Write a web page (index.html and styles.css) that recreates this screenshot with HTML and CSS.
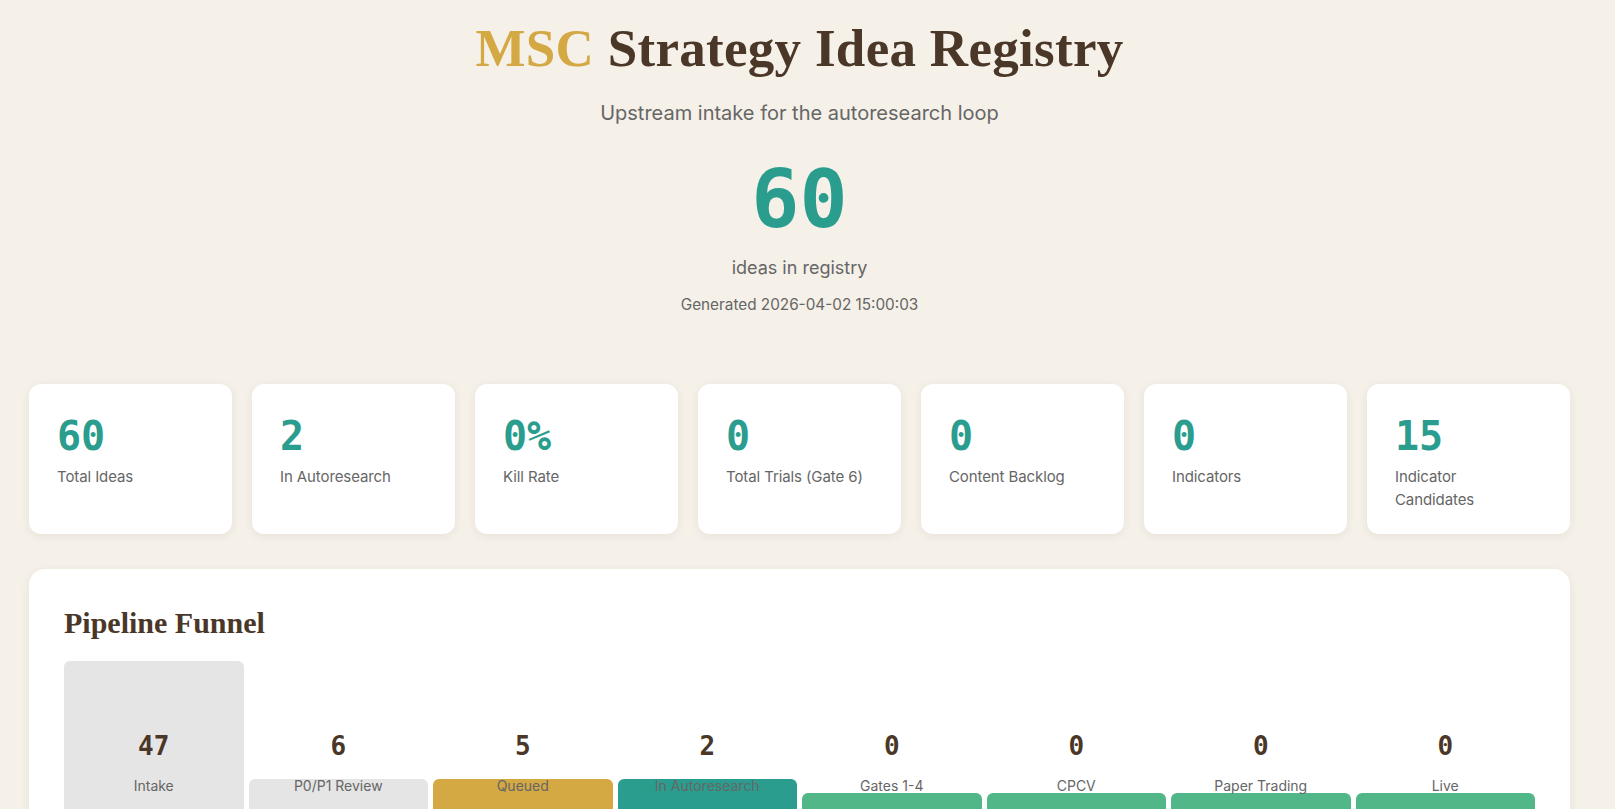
FILE: index.html
```html
<!DOCTYPE html>
<html lang="en">
<head>
<meta charset="utf-8">
<title>MSC Strategy Idea Registry</title>
<link rel="stylesheet" href="styles.css">
</head>
<body>
<div class="page">
  <header class="hero">
    <h1 class="title"><span class="brand">MSC</span> Strategy Idea Registry</h1>
    <p class="subtitle">Upstream intake for the autoresearch loop</p>
    <div class="hero-count">60</div>
    <p class="hero-label">ideas in registry</p>
    <p class="generated">Generated 2026-04-02 15:00:03</p>
  </header>

  <section class="stats">
    <div class="card"><div class="card-num">60</div><div class="card-label">Total Ideas</div></div>
    <div class="card"><div class="card-num">2</div><div class="card-label">In Autoresearch</div></div>
    <div class="card"><div class="card-num">0%</div><div class="card-label">Kill Rate</div></div>
    <div class="card"><div class="card-num">0</div><div class="card-label">Total Trials (Gate 6)</div></div>
    <div class="card"><div class="card-num">0</div><div class="card-label">Content Backlog</div></div>
    <div class="card"><div class="card-num">0</div><div class="card-label">Indicators</div></div>
    <div class="card"><div class="card-num">15</div><div class="card-label">Indicator Candidates</div></div>
  </section>

  <section class="panel">
    <h2 class="panel-title">Pipeline Funnel</h2>
    <div class="funnel">
      <div class="stage"><div class="bar bar-grey" style="height:180px"></div><div class="stage-text"><div class="stage-count">47</div><div class="stage-label">Intake</div></div></div>
      <div class="stage"><div class="bar bar-grey" style="height:62px"></div><div class="stage-text"><div class="stage-count">6</div><div class="stage-label">P0/P1 Review</div></div></div>
      <div class="stage"><div class="bar bar-gold" style="height:62px"></div><div class="stage-text"><div class="stage-count">5</div><div class="stage-label">Queued</div></div></div>
      <div class="stage"><div class="bar bar-teal" style="height:62px"></div><div class="stage-text"><div class="stage-count">2</div><div class="stage-label">In Autoresearch</div></div></div>
      <div class="stage"><div class="bar bar-green" style="height:48px"></div><div class="stage-text"><div class="stage-count">0</div><div class="stage-label">Gates 1-4</div></div></div>
      <div class="stage"><div class="bar bar-green" style="height:48px"></div><div class="stage-text"><div class="stage-count">0</div><div class="stage-label">CPCV</div></div></div>
      <div class="stage"><div class="bar bar-green" style="height:48px"></div><div class="stage-text"><div class="stage-count">0</div><div class="stage-label">Paper Trading</div></div></div>
      <div class="stage"><div class="bar bar-green" style="height:48px"></div><div class="stage-text"><div class="stage-count">0</div><div class="stage-label">Live</div></div></div>
    </div>
  </section>
</div>
</body>
</html>
```

FILE: styles.css
```css
html, body {
  margin: 0;
  padding: 0;
  background: #f5f0e8;
}
body {
  font-family: "Inter", "Noto Sans", sans-serif;
  color: #4a3728;
}
.page {
  padding: 0 45px 40px 29px;
}
.hero {
  text-align: center;
  padding-top: 17px;
}
.title {
  margin: 0;
  font-family: "Liberation Serif", serif;
  font-weight: 700;
  font-size: 53px;
  line-height: 1.2;
  color: #4a3728;
  letter-spacing: 0.3px;
}
.brand {
  color: #d4a843;
}
.subtitle {
  margin: 18px 0 0;
  font-size: 20px;
  line-height: 1.4;
  color: #666;
}
.hero-count {
  margin-top: 33px;
  font-family: "DejaVu Sans Mono", monospace;
  font-weight: 700;
  font-size: 80px;
  line-height: 1;
  color: #2a9d8f;
}
.hero-label {
  margin: 15px 0 0;
  font-size: 18px;
  line-height: 1.4;
  color: #666;
}
.generated {
  margin: 14px 0 0;
  font-size: 15.3px;
  line-height: 1.4;
  color: #666;
}
.stats {
  margin-top: 69px;
  display: grid;
  grid-template-columns: repeat(7, 1fr);
  gap: 20px;
}
.card {
  background: #fff;
  border-radius: 12px;
  padding: 24px 35px 23px 28px;
  box-shadow: 0 2px 10px rgba(74, 55, 40, 0.07);
}
.card-num {
  font-family: "DejaVu Sans Mono", monospace;
  font-weight: 700;
  font-size: 40px;
  line-height: 56px;
  color: #2a9d8f;
}
.card-label {
  margin-top: 1px;
  font-size: 15px;
  letter-spacing: -0.1px;
  line-height: 23px;
  color: #666;
}
.panel {
  margin-top: 35px;
  background: #fff;
  border-radius: 16px;
  padding: 35px;
  box-shadow: 0 2px 10px rgba(74, 55, 40, 0.07);
}
.panel-title {
  margin: 1px 0 20px;
  font-family: "Liberation Serif", serif;
  font-weight: 700;
  font-size: 30px;
  line-height: 1.2;
  color: #4a3728;
}
.funnel {
  display: grid;
  grid-template-columns: repeat(8, 1fr);
  gap: 5px;
}
.stage {
  display: grid;
  height: 180px;
}
.bar, .stage-text {
  grid-area: 1 / 1;
}
.bar {
  align-self: end;
  border-radius: 6px 6px 0 0;
}
.bar-grey { background: #e5e5e5; }
.bar-gold { background: #d4a843; }
.bar-teal { background: #2a9d8f; }
.bar-green { background: #52b788; }
.stage-text {
  align-self: end;
  text-align: center;
  padding-bottom: 46px;
}
.stage-count {
  font-family: "DejaVu Sans Mono", monospace;
  font-weight: 700;
  font-size: 26px;
  line-height: 31px;
  color: #4a3728;
}
.stage-label {
  margin-top: 15px;
  font-size: 14px;
  line-height: 18px;
  color: #666;
}
```
